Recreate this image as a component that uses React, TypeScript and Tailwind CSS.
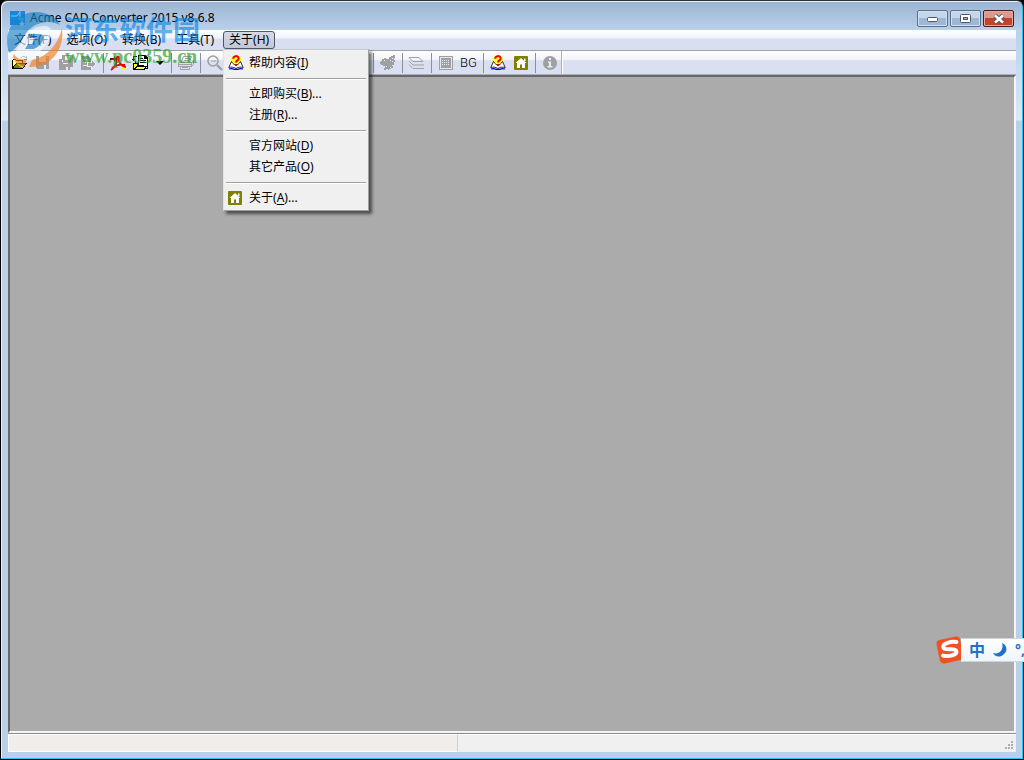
import React, { FC, ReactNode } from 'react';

interface MenuEntry {
  label: string;
  hotkey: string;
  dots?: boolean;
  icon?: ReactNode;
}

interface ToolButtonProps {
  title: string;
  children: ReactNode;
}

const FolderIcon = () => (
  <svg width="16" height="16" viewBox="0 0 16 16" shapeRendering="crispEdges">
    <path d="M0 5h1V4h3v1h6v3H4l-4 5z" fill="#ffff80" />
    <path d="M0 5h1v9H0zM1 4h3v1H1zM4 5h6v1H4zM10 5h1v3h-1z" fill="#000" />
    <path d="M4 8h11l-4 6H0z" fill="#808000" />
    <path d="M4 8h11v1H4zM0 13h11v1H0zM3 9h1v1H3zM2 10h1v1H2zM1 11h1v2H1zM13 9h1v1h-1zM12 10h1v2h-1zM11 12h1v1h-1z" fill="#000" />
    <path d="M9 2h1v1H9zM10 1h3v1h-3zM13 2h1v1h-1zM14 1h1v4h-1zM12 4h2v1h-2z" fill="#555" />
  </svg>
);

const SaveIcon = () => (
  <svg width="15" height="15" viewBox="0 0 15 15" shapeRendering="crispEdges">
    <path d="M1 1h13v13H2l-1-1z" fill="#a0a0a0" />
    <path d="M4 1h7v6H4zM9 10h2v4H9z" fill="#e9ecf6" />
    <path d="M12 2h1v1h-1z" fill="#e9ecf6" />
  </svg>
);

const SaveAsIcon = () => (
  <svg width="16" height="16" viewBox="0 0 16 16" shapeRendering="crispEdges">
    <path d="M4 0h11v12h-3v3H1V4h3z" fill="#a0a0a0" />
    <path d="M7 1h5v4H7zM4 5h1v4h5V8H5zM8 12h2v3H8z" fill="#e9ecf6" />
  </svg>
);

const ExportIcon = () => (
  <svg width="17" height="16" viewBox="0 0 17 16" shapeRendering="crispEdges">
    <path d="M1 1h7l3 3v11H1z" fill="#a0a0a0" />
    <path d="M3 4h4v1H3zM3 7h3v1H3zM3 10h4v1H3z" fill="#e9ecf6" />
    <path d="M7 7h4V4l5 5-5 5v-3H7z" fill="#a0a0a0" stroke="#e9ecf6" />
  </svg>
);

const PdfIcon = () => (
  <svg width="18" height="16" viewBox="0 0 18 16">
    <path d="M4 15h4v-2h5v-1M9 3v4M13 14h3M14 9h3" fill="none" stroke="#ffff00" strokeWidth="2" strokeDasharray="1 1" />
    <path
      d="M2 15c3-2 6-6 6-12 0-2 2-2 2 0-1 4 2 8 7 9M3 13c4-3 8-4 13-3"
      fill="none"
      stroke="#f00000"
      strokeWidth="1.800"
    />
    <path d="M1 3h4V1l3 3-3 3V5H1z" fill="#900000" />
  </svg>
);

const BatchIcon = () => (
  <svg width="17" height="16" viewBox="0 0 17 16" shapeRendering="crispEdges">
    <path d="M6 0h7l3 3v11H6z" fill="#000" />
    <path d="M7 1h5v3h3v9H7z" fill="#fff" />
    <path d="M8 3h3v1H8zM8 5h6v1H8zM8 7h6v1H8z" fill="#000" />
    <path d="M1 1h4v1H1zM1 2h1v4H1zM0 4h3v1H0zM3 6h1v2H3z" fill="#000" />
    <path d="M1 8h5v2h6v5H1z" fill="#000" />
    <path d="M2 9h3v2h6v3H2z" fill="#ffff00" />
    <path d="M4 11h11l-2 4H1z" fill="#000" />
    <path d="M5 12h8l-1 2H3z" fill="#ffff60" />
  </svg>
);

const PrinterIcon = () => (
  <svg width="18" height="16" viewBox="0 0 18 16" fill="none" stroke="#a0a0a0">
    <path d="M4.500 6.500l2-5h8l-2 5M8 3.500h5M7 5.500h5M1.500 7.500h13v4h-13zM14.500 7.500l2-2v4l-2 2M1.500 9.500h13" />
    <path d="M3.500 12.500v2h9v-2M5 12.500h6" />
  </svg>
);

const MagnifierIcon = () => (
  <svg width="16" height="16" viewBox="0 0 16 16" fill="none" stroke="#a0a0a0">
    <circle cx="6" cy="6" r="5" strokeWidth="1.600" />
    <path d="M4 6h5" strokeWidth="1.200" />
    <path d="M10 10l5 5" strokeWidth="2.400" />
  </svg>
);

const RegenIcon = () => (
  <svg width="16" height="16" viewBox="0 0 16 16" shapeRendering="crispEdges">
    <path
      d="M2 4h2V3h2v1h3V2h2V1h2V0h2v3h-1v2h1v2h-1v3h-2v1h1v2h-2v1h-2v1H8v-1H6v1H4v-2h1v-2H3v-1H1V9H0V7h1V6h1z"
      fill="#a0a0a0"
    />
    <path d="M4 5h1v1H4zM12 3h1v1h-1zM10 5h1v1h-1zM12 6h1v1h-1zM6 11h1v1H6zM10 12h1v1h-1z" fill="#e9ecf6" />
  </svg>
);

const LayersIcon = () => (
  <svg width="17" height="14" viewBox="0 0 17 14" fill="none" stroke="#a0a0a0">
    <path d="M1 1.500h10l4 4H5zM1 5l4 4h11M1 8.500l4 4h11" />
  </svg>
);

const GridIcon = () => (
  <svg width="14" height="14" viewBox="0 0 14 14" shapeRendering="crispEdges">
    <path d="M0 0h14v14H0z" fill="#a0a0a0" />
    <path d="M1 1h12v12H1z" fill="#e3e7f4" />
    <path d="M2 2h10v10H2z" fill="#a0a0a0" />
    <path d="M3 4.500h8M3 6.500h8M3 8.500h8" stroke="#e3e7f4" strokeDasharray="1 1" />
  </svg>
);

const HelpIcon = () => (
  <svg width="16" height="16" viewBox="0 0 16 16">
    <circle cx="8" cy="5.500" r="5.500" fill="#ffff30" />
    <path d="M3.500 6.500L.8 12.500c2-.6 5-.6 7.200 1 2-1.600 5-1.600 7.200-1L12.500 6.500C11.500 9 9 9.500 8 11 7 9.500 4.500 9 3.500 6.500z" fill="#fff" stroke="#000" strokeWidth=".8" />
    <path d="M1 14c2-.6 4-.4 5 .4h4c1-.8 3-1 5-.4" stroke="#0000d0" strokeWidth="1.200" fill="none" />
    <path d="M5.300 3.700C5.300.3 10.700.3 10.700 3.500 10.700 5.500 8 5.300 8 7.500" stroke="#f00000" strokeWidth="2" fill="none" />
    <path d="M7 9h2v2H7z" fill="#f00000" />
  </svg>
);

const HomeIcon = () => (
  <svg width="14" height="14" viewBox="0 0 14 14">
    <rect width="14" height="14" rx="1" fill="#808000" />
    <path d="M7 2l5.500 5H11v5H8V8.500H6V12H3V7H1.500z" fill="#fff" />
    <path d="M10 2.500h1.500V5H10z" fill="#fff" />
  </svg>
);

const InfoIcon = () => (
  <svg width="14" height="14" viewBox="0 0 14 14">
    <circle cx="7" cy="7" r="7" fill="#a0a0a0" />
    <path d="M6 2h2v2H6zM5 5.500h3V10h1.500v1.500H4.500V10H6V7H5z" fill="#e9ecf6" />
  </svg>
);

const AppIcon = () => (
  <svg width="16" height="16" viewBox="0 0 16 16">
    <path d="M0 1h15v14H0z" fill="#1687d9" />
    <path d="M1 6h6l3-4M8 9h6M10 1v8l4 5" stroke="#7cc6f5" fill="none" />
    <path d="M12 11l1 2 2 .3-1.500 1.200.5 1.500-2-1-2 1 .5-1.500L9 13.300l2-.3z" fill="#fff" />
  </svg>
);

const SiteLogo = () => (
  <svg width="60" height="60" viewBox="0 0 60 60" className="shrink-0">
    <path d="M4 43C-3 20 11 2 31 2c11 0 20 5 24 13C44 9 30 12 22 22c-6 8-9 16-18 21z" fill="#1c83c6" />
    <path d="M14 36c5-12 15-21 27-20 6 1 7 6 4 12-4 9-12 17-22 20l-5 10c-9-4-12-12-4-22z" fill="#f4f9fd" />
    <path d="M23 24h13c5 2 2 11-7 15h-9l3-5h4l3-6h-6z" fill="#1c83c6" />
    <path d="M57 18c3 20-10 40-33 39l3-7c15-3 26-15 30-32z" fill="#f07c1c" />
    <path d="M9 44c-3 4 2 10 10 13l3-8c-7 1-11-1-13-5z" fill="#f07c1c" />
  </svg>
);

const SogouIcon = () => (
  <svg width="30" height="30" viewBox="0 0 30 30" className="shrink-0">
    <g transform="rotate(-12 15 15)">
      <rect x="3" y="3" width="24" height="24" rx="4" fill="#f1511f" />
      <path
        d="M23 8.500c-5-2-14-1.500-14 2.500 0 4.500 12 2 12 6.500 0 4-9 4-14 1.500"
        fill="none"
        stroke="#fff"
        strokeWidth="4"
        strokeLinecap="round"
      />
    </g>
  </svg>
);

const ToolButton: FC<ToolButtonProps> = ({ title, children }) => (
  <button type="button" aria-label={title} className="flex h-[22px] w-[23px] shrink-0 items-center justify-center">
    {children}
  </button>
);

const Divider = () => (
  <div className="flex w-[6px] shrink-0 justify-center">
    <div className="h-5 w-px bg-[#8c8f98]" />
  </div>
);

const menuBar = [
  { label: '文件', hotkey: 'F' },
  { label: '选项', hotkey: 'O' },
  { label: '转换', hotkey: 'B' },
  { label: '工具', hotkey: 'T' },
];

const aboutMenu: MenuEntry[][] = [
  [{ label: '帮助内容', hotkey: 'I', icon: <HelpIcon /> }],
  [
    { label: '立即购买', hotkey: 'B', dots: true },
    { label: '注册', hotkey: 'R', dots: true },
  ],
  [
    { label: '官方网站', hotkey: 'D' },
    { label: '其它产品', hotkey: 'O' },
  ],
  [{ label: '关于', hotkey: 'A', dots: true, icon: <HomeIcon /> }],
];

const TitleBar = () => (
  <header className="flex h-[29px] shrink-0 items-start justify-between pl-[2px]">
    <div className="flex items-center gap-1 pt-[9px]">
      <AppIcon />
      <h1 className="text-[12px] leading-4 text-black">Acme CAD Converter 2015 v8.6.8</h1>
    </div>
    <div className="flex gap-[2px] pt-[9px] pr-[2px]">
      <button
        type="button"
        aria-label="最小化"
        className="flex h-[17px] w-[31px] items-center justify-center rounded-[2px] border border-[#5a6e8c] bg-linear-to-b from-[#c3d6ea] from-50% to-[#9db8d4] to-50% shadow-[inset_0_0_0_1px_#d3e2f2]"
      >
        <svg width="12" height="6" viewBox="0 0 12 6">
          <rect x=".5" y="1.500" width="10" height="4" rx="1" fill="#fff" stroke="#535666" />
        </svg>
      </button>
      <button
        type="button"
        aria-label="最大化"
        className="flex h-[17px] w-[31px] items-center justify-center rounded-[2px] border border-[#5a6e8c] bg-linear-to-b from-[#c3d6ea] from-50% to-[#9db8d4] to-50% shadow-[inset_0_0_0_1px_#d3e2f2]"
      >
        <svg width="11" height="9" viewBox="0 0 11 9">
          <rect x=".5" y=".5" width="10" height="8" rx="1" fill="#fff" stroke="#535666" />
          <rect x="3.500" y="3.500" width="4" height="2" fill="#9db8d4" stroke="#535666" />
        </svg>
      </button>
      <button
        type="button"
        aria-label="关闭"
        className="flex h-[17px] w-[31px] items-center justify-center rounded-[2px] border border-[#4a1a1e] bg-linear-to-b from-[#dd9a8c] from-50% to-[#c0432a] to-50% shadow-[inset_0_0_0_1px_#e5a99c]"
      >
        <svg width="12" height="10" viewBox="0 0 12 10">
          <path d="M2 1.500l8 7M10 1.500l-8 7" stroke="#535666" strokeWidth="4.500" />
          <path d="M2 1.500l8 7M10 1.500l-8 7" stroke="#fff" strokeWidth="2.500" />
        </svg>
      </button>
    </div>
  </header>
);

const AboutMenu = () => (
  <div
    role="menu"
    className="absolute top-full left-0 z-10 w-[146px] border border-[#a0a0a0] border-t-[#c8c8c8] border-l-[#e3e3e3] bg-[#f0f0f0] p-[2px] shadow-[3px_3px_3px_rgba(0,0,0,0.55)]"
  >
    {aboutMenu.map((group, index) => (
      <React.Fragment key={index}>
        {index > 0 && (
          <div className="flex h-[10px] items-end pb-[3px]">
            <div className="h-[2px] w-full border-t border-[#a0a0a0] bg-white" />
          </div>
        )}
        {group.map((item) => (
          <button
            key={item.label}
            type="button"
            role="menuitem"
            className="flex h-[21px] w-full items-center whitespace-nowrap pl-px text-left text-[12px] leading-4"
          >
            <span className="flex w-[22px] shrink-0 items-center pl-px">{item.icon}</span>
            <span>
              {item.label}(<u className="underline-offset-2">{item.hotkey}</u>){item.dots && '...'}
            </span>
          </button>
        ))}
      </React.Fragment>
    ))}
  </div>
);

const MenuBar = () => (
  <nav className="flex h-[21px] shrink-0 items-start gap-[3px] border-b border-[#a0a0a0] bg-linear-to-b from-white via-[#f0f3fa] via-40% to-[#d9dff1] to-45% pt-px">
    {menuBar.map((item) => (
      <button
        key={item.label}
        type="button"
        className="h-[18px] border border-transparent px-[5px] text-[12px] leading-4 whitespace-nowrap"
      >
        {item.label}({item.hotkey})
      </button>
    ))}
    <div className="relative">
      <button
        type="button"
        aria-expanded="true"
        className="block h-[18px] rounded-[3px] border border-[#4d5566] bg-linear-to-b from-[#d6dae4] to-[#c0c7d8] px-[5px] text-[12px] leading-4 whitespace-nowrap"
      >
        关于(H)
      </button>
      <AboutMenu />
    </div>
  </nav>
);

const Toolbar = () => (
  <div className="flex h-6 shrink-0 items-center border-b border-[#a9adb8] bg-linear-to-b from-white via-[#f2f4fb] via-38% to-[#dae0f2] to-42%">
    <ToolButton title="打开"><FolderIcon /></ToolButton>
    <ToolButton title="保存"><SaveIcon /></ToolButton>
    <ToolButton title="另存为"><SaveAsIcon /></ToolButton>
    <ToolButton title="导出"><ExportIcon /></ToolButton>
    <Divider />
    <ToolButton title="PDF"><PdfIcon /></ToolButton>
    <ToolButton title="批量转换"><BatchIcon /></ToolButton>
    <button type="button" aria-label="更多" className="flex h-[22px] w-4 shrink-0 items-center justify-center">
      <svg width="8" height="4" viewBox="0 0 8 4">
        <path d="M0 0h8L4 4z" fill="#000" />
      </svg>
    </button>
    <Divider />
    <ToolButton title="打印"><PrinterIcon /></ToolButton>
    <Divider />
    <ToolButton title="缩放"><MagnifierIcon /></ToolButton>
    <div className="w-36 shrink-0" />
    <Divider />
    <ToolButton title="刷新"><RegenIcon /></ToolButton>
    <Divider />
    <ToolButton title="图层"><LayersIcon /></ToolButton>
    <Divider />
    <ToolButton title="网格"><GridIcon /></ToolButton>
    <ToolButton title="背景">
      <span className="font-['Roboto',sans-serif] text-[13px] leading-4 font-light">BG</span>
    </ToolButton>
    <Divider />
    <ToolButton title="帮助"><HelpIcon /></ToolButton>
    <ToolButton title="主页"><HomeIcon /></ToolButton>
    <Divider />
    <ToolButton title="信息"><InfoIcon /></ToolButton>
    <div className="h-full w-px bg-[#a9adb8]" />
    <div className="h-full w-px bg-white" />
  </div>
);

const StatusBar = () => (
  <footer className="flex h-[19px] shrink-0 border-t border-[#8a8a8a] bg-[#f0f0f0]">
    <div className="w-[450px] border border-white border-r-[#cfcfcf] bg-[#f0edeb]" />
    <div className="flex flex-1 items-end justify-end border-t border-white p-[2px]">
      <svg width="9" height="9" viewBox="0 0 9 9" fill="#b0aeac" shapeRendering="crispEdges">
        <path d="M6 0h2v2H6zM3 3h2v2H3zM6 3h2v2H6zM0 6h2v2H0zM3 6h2v2H3zM6 6h2v2H6z" />
      </svg>
    </div>
  </footer>
);

const Watermark = () => (
  <div className="pointer-events-none absolute top-[9px] left-[4px] z-20 flex opacity-65">
    <SiteLogo />
    <div className="flex flex-col pt-[6px] whitespace-nowrap">
      <span className="text-[27px] leading-7 font-bold text-[#1088e8]">河东软件园</span>
      <span className="font-['Liberation_Serif',serif] text-[20px] leading-6 font-bold text-[#1f9f1f]">
        www.pc0359.cn
      </span>
    </div>
  </div>
);

const InputMethodBar = () => (
  <div className="absolute right-0 bottom-[95px] z-20 flex w-[89px] items-center overflow-hidden">
    <SogouIcon />
    <div className="-ml-1 flex h-6 flex-1 items-center gap-2 border-y border-[#c9d6e2] bg-linear-to-b from-white to-[#eef5fb] pl-2 text-[#1f72c8]">
      <span className="text-[16px] leading-5 font-bold">中</span>
      <svg width="14" height="14" viewBox="0 0 14 14" className="shrink-0">
        <path d="M9 0c5 2 6 8 2 11-4 4-9 3-11-1 7 2 11-4 9-10z" fill="#1f72c8" />
      </svg>
      <span className="text-[14px] leading-5 font-bold">°,</span>
    </div>
  </div>
);

const App: FC = () => {
  return (
    <div className="h-screen bg-black font-['Noto_Sans','Noto_Sans_CJK_SC',sans-serif] text-black">
      <div className="relative flex h-full flex-col overflow-hidden rounded-t-[7px] border border-black border-t-[#2a2f38] bg-[linear-gradient(to_bottom,#9ab3d1_0px,#b9d1ea_29px,#dce8f6_119px,#b9d1ea_120px,#b9cfea_100%)] px-[7px] pb-[7px] shadow-[inset_-1px_-1px_0_#27c4ea,inset_1px_1px_0_#e8f2fb]">
        <TitleBar />
        <MenuBar />
        <Toolbar />
        <main className="flex-1 border-2 border-t-[#696969] border-r-[#f4f4f4] border-b-[#f4f4f4] border-l-[#696969] bg-[#ababab]" />
        <StatusBar />
        <Watermark />
      </div>
      <InputMethodBar />
    </div>
  );
};

export default App;
